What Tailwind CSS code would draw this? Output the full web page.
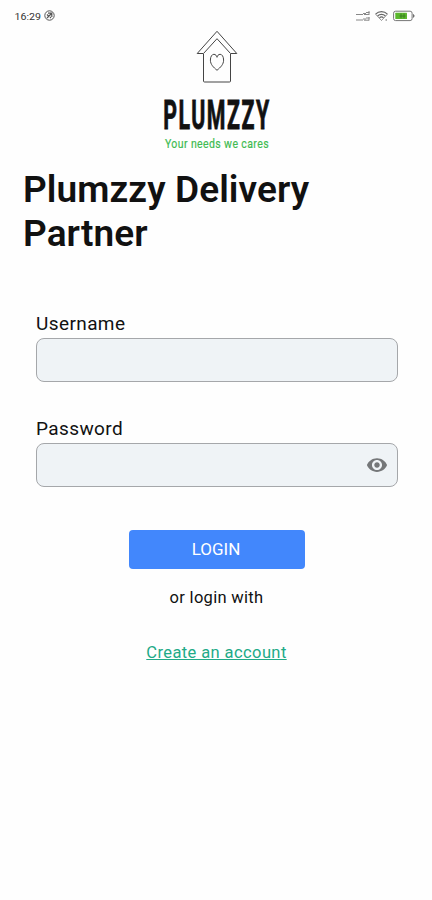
<!DOCTYPE html>
<html lang="en">
<head>
  <meta charset="UTF-8">
  <meta name="viewport" content="width=device-width, initial-scale=1.0">
  <title>Plumzzy Delivery Partner</title>
  <script src="https://cdn.jsdelivr.net/npm/@tailwindcss/browser@4"></script>
</head>
<body class="bg-[#fefefe] font-['Roboto',sans-serif] text-[#111]">
  <div class="w-[432px] h-[900px] overflow-hidden">
    <!-- Status bar -->
    <header class="h-[30px] pl-[14px] pr-[17px] pt-px flex justify-between items-center">
      <div class="flex items-center gap-[2px]">
        <svg width="28" height="12" class="text-[#333]">
          <text x="0.5" y="9.5" font-size="9.5" textLength="26.5" lengthAdjust="spacingAndGlyphs" fill="currentColor">16:29</text>
        </svg>
        <svg width="11" height="11" viewBox="0 0 11 11" fill="none" stroke="#555">
          <circle cx="5.5" cy="5.5" r="4.7" stroke-width="1"/>
          <path d="M3 8l4.5-4.5M4 3.2h3.8V7M3 4.5l1.5 1.5M6 7l1 1" stroke-width="1.2"/>
        </svg>
      </div>
      <div class="flex items-center">
        <svg width="14" height="12" viewBox="0 0 14 12" stroke="#888" fill="none">
          <path d="M0 4.5h7M7 3.5h3M10 2.5h3.5M13 1v4M8 4.5h5" stroke-width="1"/>
          <path d="M0 10h7M7 9h3M10 8h3.5M13 7v3.5M8 10.2h5" stroke-width="1"/>
        </svg>
        <svg width="13" height="12" viewBox="0 0 13 12" stroke="#666" fill="none" class="ml-[5px]">
          <path d="M.6 4.2C3.8.8 9.2.8 12.4 4.2M2.6 6c2.2-2.2 5.6-2.2 7.8 0M4.5 7.9c1.1-1.1 2.9-1.1 4 0" stroke-width="1.2"/>
          <path d="M.6 4.2L6.5 10.5l5.9-6.3" stroke-width=".7"/>
          <path d="M10.5 10h1.5" stroke-width="1"/>
        </svg>
        <svg width="22" height="12" viewBox="0 0 22 12" class="ml-[5px]">
          <rect x=".6" y="1.2" width="18.5" height="9.4" rx="2" fill="#fff" stroke="#777"/>
          <rect x="2.3" y="2.8" width="11.7" height="6.2" rx=".5" fill="#5cb82e"/>
          <path d="M8 3.5v4.8M11 3.5v4.8M6.5 6h6" stroke="#397a22" stroke-width=".9"/>
          <path d="M20 4l1.4 1.9L20 7.8" fill="#666" stroke="#666" stroke-width=".6"/>
        </svg>
      </div>
    </header>

    <!-- Logo -->
    <div class="pl-px flex flex-col items-center">
      <svg width="112" height="60" viewBox="0 0 112 60" fill="none" stroke="#444" stroke-width="1">
        <path d="M56 1.3L75.800 23.5h-6.3L56 8.7 42.500 23.5h-6.3z" stroke-linejoin="round"/>
        <path d="M42.500 24V51q0 1 1 1h25q1 0 1-1V24"/>
        <path d="M56 40.3c-3.5-3-6.6-5.8-6.6-10.2 0-3.6 1.6-5.8 3.5-5.8 1.7 0 2.8 1.5 3.1 3 .3-1.5 1.4-3 3.1-3 1.9 0 3.5 2.2 3.5 5.8 0 4.4-3.1 7.2-6.6 10.2z"/>
      </svg>
      <svg width="120" height="44" viewBox="0 0 120 44" class="overflow-visible">
        <text x="6.2" y="38.5" font-size="41" font-weight="700" letter-spacing="3" textLength="107.5" lengthAdjust="spacingAndGlyphs" fill="#111" stroke="#111" stroke-width=".9">PLUMZZY</text>
      </svg>
      <svg width="120" height="20" viewBox="0 0 120 20" class="overflow-visible">
        <text x="8" y="13.5" font-size="13.5" letter-spacing=".5" textLength="104" lengthAdjust="spacingAndGlyphs" fill="#3fbb51" stroke="#3fbb51" stroke-width=".2">Your needs we cares</text>
      </svg>
    </div>

    <h1 class="mt-[14px] pl-[23px] text-[37px] leading-[43.5px] tracking-[0.1px] font-semibold w-[340px]">Plumzzy Delivery Partner</h1>

    <!-- Login form -->
    <form class="mt-14 pl-9 pr-[34px] flex flex-col">
      <label for="username" class="h-[27px] leading-[25px] text-[19px] tracking-[0.4px]">Username</label>
      <input id="username" type="text" class="h-11 rounded-lg border border-[#a5a7aa] bg-[#eff3f6] px-3">
      <label for="password" class="mt-[34px] h-[27px] leading-[25px] text-[19px] tracking-[0.4px]">Password</label>
      <div class="h-11 rounded-lg border border-[#a5a7aa] bg-[#eff3f6] pl-3 pr-[9px] flex items-center">
        <input id="password" type="password" class="flex-1 bg-transparent">
        <svg width="22" height="22" viewBox="0 0 24 24" fill="#757779">
          <path d="M12 4.5C7 4.5 2.73 7.61 1 12c1.73 4.39 6 7.5 11 7.5s9.27-3.11 11-7.5c-1.73-4.39-6-7.5-11-7.5zM12 17.5c-3 0-5.5-2.5-5.5-5.5s2.500-5.500 5.500-5.500 5.500 2.500 5.500 5.500-2.500 5.500-5.500 5.500zm0-8.500c-1.660 0-3 1.340-3 3s1.340 3 3 3 3-1.340 3-3-1.340-3-3-3z"/>
        </svg>
      </div>
      <button type="button" class="mt-[43px] self-center w-[176px] h-[39px] rounded bg-[#4287fc] text-white text-[17px] pt-px pr-[2px]">LOGIN</button>
    </form>

    <p class="mt-[17px] pl-px text-center text-[16.5px] leading-6 tracking-[0.3px]">or login with</p>
    <p class="mt-[31px] pl-px text-center text-[16.5px] leading-6 tracking-[0.4px]"><a href="#" class="text-[#21aa87] underline">Create an account</a></p>
  </div>
</body>
</html>
